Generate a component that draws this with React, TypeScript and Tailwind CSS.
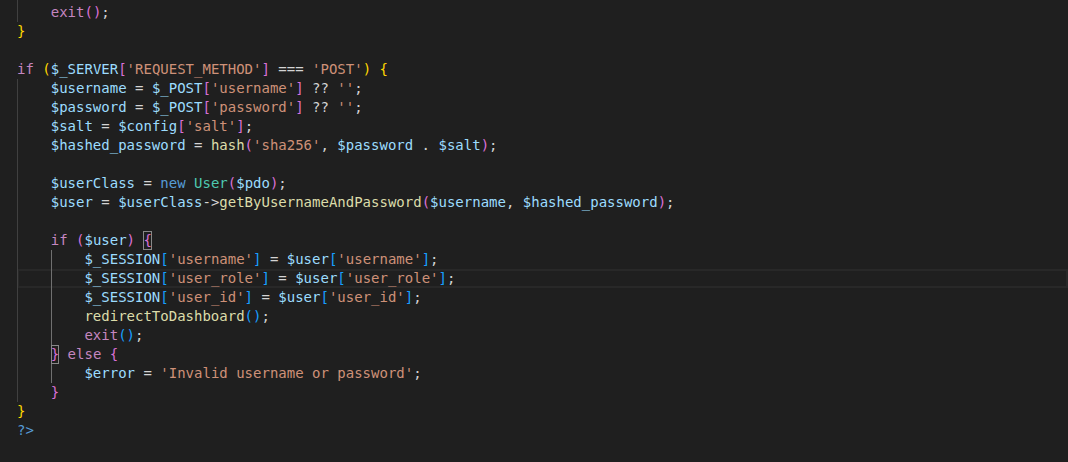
import React from "react";

type Tok = [string, string];

const v = "text-[#9cdcfe]";
const s = "text-[#ce9178]";
const k = "text-[#c586c0]";
const f = "text-[#dcdcaa]";
const t = "text-[#4ec9b0]";
const b = "text-[#569cd6]";
const p = "text-[#d4d4d4]";
const y = "text-[#ffd700]";
const o = "text-[#da70d6]";
const l = "text-[#179fff]";

type Line = {
  toks: Tok[];
  guides?: number[];
  active?: boolean;
  current?: boolean;
  match?: number; // index of token with bracket match box
};

const lines: Line[] = [
  { toks: [["    ", p], ["redirectToDashboard", f], ["(", o], [")", o], [";", p]], guides: [0] },
  { toks: [["    ", p], ["exit", k], ["(", o], [")", o], [";", p]], guides: [0] },
  { toks: [["}", y]] },
  { toks: [] },
  {
    toks: [
      ["if", k], [" ", p], ["(", y], ["$_SERVER", v], ["[", o], ["'REQUEST_METHOD'", s], ["]", o],
      [" === ", p], ["'POST'", s], [")", y], [" ", p], ["{", y],
    ],
  },
  {
    toks: [["    ", p], ["$username", v], [" = ", p], ["$_POST", v], ["[", o], ["'username'", s], ["]", o], [" ?? ", p], ["''", s], [";", p]],
    guides: [0],
  },
  {
    toks: [["    ", p], ["$password", v], [" = ", p], ["$_POST", v], ["[", o], ["'password'", s], ["]", o], [" ?? ", p], ["''", s], [";", p]],
    guides: [0],
  },
  {
    toks: [["    ", p], ["$salt", v], [" = ", p], ["$config", v], ["[", o], ["'salt'", s], ["]", o], [";", p]],
    guides: [0],
  },
  {
    toks: [
      ["    ", p], ["$hashed_password", v], [" = ", p], ["hash", f], ["(", o], ["'sha256'", s], [", ", p],
      ["$password", v], [" . ", p], ["$salt", v], [")", o], [";", p],
    ],
    guides: [0],
  },
  { toks: [], guides: [0] },
  {
    toks: [["    ", p], ["$userClass", v], [" = ", p], ["new", b], [" ", p], ["User", t], ["(", o], ["$pdo", v], [")", o], [";", p]],
    guides: [0],
  },
  {
    toks: [
      ["    ", p], ["$user", v], [" = ", p], ["$userClass", v], ["->", p], ["getByUsernameAndPassword", f], ["(", o],
      ["$username", v], [", ", p], ["$hashed_password", v], [")", o], [";", p],
    ],
    guides: [0],
  },
  { toks: [], guides: [0] },
  {
    toks: [["    ", p], ["if", k], [" ", p], ["(", o], ["$user", v], [")", o], [" ", p], ["{", o]],
    guides: [0],
    match: 7,
  },
  {
    toks: [["        ", p], ["$_SESSION", v], ["[", l], ["'username'", s], ["]", l], [" = ", p], ["$user", v], ["[", l], ["'username'", s], ["]", l], [";", p]],
    guides: [0, 4],
    active: true,
  },
  {
    toks: [["        ", p], ["$_SESSION", v], ["[", l], ["'user_role'", s], ["]", l], [" = ", p], ["$user", v], ["[", l], ["'user_role'", s], ["]", l], [";", p]],
    guides: [0, 4],
    active: true,
    current: true,
  },
  {
    toks: [["        ", p], ["$_SESSION", v], ["[", l], ["'user_id'", s], ["]", l], [" = ", p], ["$user", v], ["[", l], ["'user_id'", s], ["]", l], [";", p]],
    guides: [0, 4],
    active: true,
  },
  { toks: [["        ", p], ["redirectToDashboard", f], ["(", l], [")", l], [";", p]], guides: [0, 4], active: true },
  { toks: [["        ", p], ["exit", k], ["(", l], [")", l], [";", p]], guides: [0, 4], active: true },
  { toks: [["    ", p], ["}", o], [" ", p], ["else", k], [" ", p], ["{", o]], guides: [0, 4], active: true, match: 1 },
  { toks: [["        ", p], ["$error", v], [" = ", p], ["'Invalid username or password'", s], [";", p]], guides: [0, 4], active: true },
  { toks: [["    ", p], ["}", o]], guides: [0] },
  { toks: [["}", y]] },
  { toks: [["?>", b]] },
  { toks: [] },
  { toks: [] },
];

const CodeLine = ({ line }: { line: Line }) => {
  return (
    <div className="relative h-[19px] pl-[17px] whitespace-pre">
      {line.current && (
        <div className="absolute left-[17px] right-0 top-0 bottom-0 border-2 border-[#282828]" />
      )}
      {line.guides?.includes(0) && (
        <div className="absolute left-[17px] top-0 bottom-0 w-px bg-[#404040]" />
      )}
      {line.guides?.includes(4) && (
        <div
          className={
            line.active
              ? "absolute left-[51px] top-0 bottom-0 w-px bg-[#707070]"
              : "absolute left-[51px] top-0 bottom-0 w-px bg-[#404040]"
          }
        />
      )}
      <span className="relative">
        {line.toks.map(([text, cls], i) =>
          line.match === i ? (
            <span
              key={i}
              className={`${cls} inline-block h-[19px] align-top shadow-[inset_0_0_0_1px_#888888]`}
            >
              {text}
            </span>
          ) : (
            <span key={i} className={cls}>
              {text}
            </span>
          )
        )}
      </span>
    </div>
  );
};

export default function App() {
  return (
    <div className="h-[462px] w-full overflow-hidden bg-[#1f1f1f] font-['DejaVu_Sans_Mono','Liberation_Mono',monospace] text-[14px] leading-[19px] text-[#d4d4d4]">
      <div className="-mt-[16px] flex flex-col">
        {lines.map((line, i) => (
          <CodeLine key={i} line={line} />
        ))}
      </div>
    </div>
  );
}
